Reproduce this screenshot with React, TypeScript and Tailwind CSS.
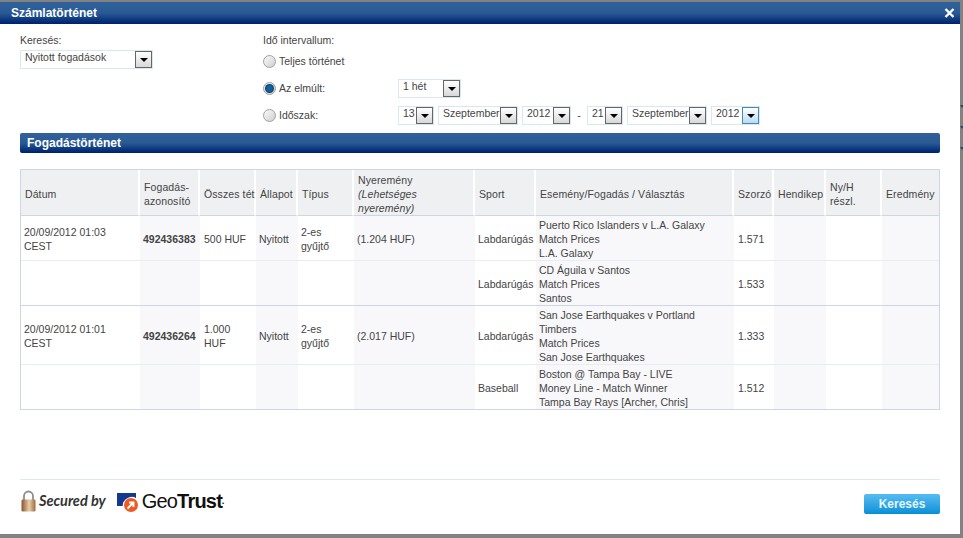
import React from "react";

const font = "font-['Liberation_Sans',Arial,sans-serif]";

const Select = ({ value, width, focused = false }: { value: string; width: string; focused?: boolean }) => (
  <div className={`${width} h-[19px] border border-[#d8e8f0] bg-white flex items-center justify-between pl-[4px] text-[10.5px] text-[#444]`}>
    <span className="relative top-[-2px] whitespace-nowrap">{value}</span>
    <span
      className={`w-[17px] h-[17px] shrink-0 border flex items-center justify-center ${
        focused ? "border-[#4a86b0] bg-gradient-to-b from-white to-[#b5dcf5]" : "border-[#666] bg-gradient-to-b from-white to-[#d8d8d8]"
      }`}
    >
      <span className="w-0 h-0 border-x-[4px] border-x-transparent border-t-[4px] border-t-black mt-[1px]" />
    </span>
  </div>
);

const Radio = ({ checked = false }: { checked?: boolean }) => (
  <span className="w-[13px] h-[13px] rounded-full border border-[#a0a0a0] bg-gradient-to-br from-[#fafafa] to-[#cfcfcf] flex items-center justify-center shrink-0">
    {checked && <span className="w-[7px] h-[7px] rounded-full bg-[#125f9c] ring-1 ring-[#0b3c66]" />}
  </span>
);

const Bar = ({ children, className }: { children: React.ReactNode; className: string }) => (
  <div className={`bg-gradient-to-b from-[#30619b] via-[#2a5a94] to-[#001f6e] text-white font-bold text-[12px] flex items-center ${className}`}>
    {children}
  </div>
);

const columns = [120, 60, 56, 42, 56, 121, 61, 198, 40, 52, 56, 58];

const shaded = (i: number) => i % 2 === 1;

const headers: React.ReactNode[] = [
  "Dátum",
  <>Fogadás-<br />azonosító</>,
  "Összes tét",
  "Állapot",
  "Típus",
  <>Nyeremény<br /><i>(Lehetséges<br />nyeremény)</i></>,
  "Sport",
  "Esemény/Fogadás / Választás",
  "Szorzó",
  "Hendikep",
  <>Ny/H<br />részl.</>,
  "Eredmény",
];

const rows = [
  {
    height: "h-[45px]",
    border: "border-[#e8edf0]",
    date: <>20/09/2012 01:03<br />CEST</>,
    id: "492436383",
    stake: "500 HUF",
    state: "Nyitott",
    type: <>2-es<br />gyűjtő</>,
    win: "(1.204 HUF)",
    sport: "Labdarúgás",
    event: ["Puerto Rico Islanders v L.A. Galaxy", "Match Prices", "L.A. Galaxy"],
    odds: "1.571",
  },
  {
    height: "h-[45px]",
    border: "border-[#ccd6e4]",
    sport: "Labdarúgás",
    event: ["CD Águila v Santos", "Match Prices", "Santos"],
    odds: "1.533",
  },
  {
    height: "h-[59px]",
    border: "border-[#e8edf0]",
    date: <>20/09/2012 01:01<br />CEST</>,
    id: "492436264",
    stake: <>1.000<br />HUF</>,
    state: "Nyitott",
    type: <>2-es<br />gyűjtő</>,
    win: "(2.017 HUF)",
    sport: "Labdarúgás",
    event: ["San Jose Earthquakes v Portland", "Timbers", "Match Prices", "San Jose Earthquakes"],
    odds: "1.333",
  },
  {
    height: "h-[44px]",
    border: "border-[#ccd6e4]",
    sport: "Baseball",
    event: ["Boston @ Tampa Bay - LIVE", "Money Line - Match Winner", "Tampa Bay Rays [Archer, Chris]"],
    odds: "1.512",
  },
];

const LockIcon = () => (
  <svg width="15" height="22" viewBox="0 0 15 22">
    <defs>
      <linearGradient id="lockBody" x1="0" x2="1" y1="0" y2="0">
        <stop offset="0" stopColor="#8a5230" />
        <stop offset="0.55" stopColor="#e8cfa8" />
        <stop offset="1" stopColor="#9a6a42" />
      </linearGradient>
    </defs>
    <path d="M3 10V6a4.5 4.5 0 0 1 9 0v4" fill="none" stroke="#8e8e8e" strokeWidth="1.8" />
    <rect x="0.5" y="9.5" width="14" height="12" rx="1.2" fill="url(#lockBody)" />
  </svg>
);

const GeoMark = () => (
  <svg width="21" height="19" viewBox="0 0 21 19">
    <path d="M0 0H19V5H13C9 5 6.5 8 6 13H0Z" fill="#15388f" />
    <circle cx="14" cy="12" r="8.4" fill="#fff" />
    <path d="M0 0H19V3.2C12 3.2 6.5 6 5 13H0Z" fill="#15388f" />
    <circle cx="14" cy="12" r="7" fill="#ef5a22" />
    <path d="M10.5 15.5L15.5 10.5M12 9.5H16.5V14" fill="none" stroke="#fff" strokeWidth="1.9" />
  </svg>
);

export default function App() {
  return (
    <div className={`${font} w-[963px] h-[538px] overflow-hidden bg-[#828282] pt-[2px] flex items-start`}>
      <div className="w-[960px] h-[532px] shrink-0 bg-white flex flex-col">
        <Bar className="h-[22px] shrink-0 pl-[11px] pr-[5px] justify-between">
          <span>Számlatörténet</span>
          <svg width="11" height="10" viewBox="0 0 11 10">
            <path d="M1.5 1L9.5 9M9.5 1L1.5 9" stroke="#fff" strokeWidth="2.4" />
          </svg>
        </Bar>

        <div className="flex-1 flex flex-col px-[20px]">
          <div className="flex text-[10.5px] text-[#444]">
            <div className="w-[243px] pt-[9px]">
              <div className="h-[17px] leading-[14px]">Keresés:</div>
              <Select value="Nyitott fogadások" width="w-[133px]" />
            </div>
            <div className="pt-[9px] flex flex-col">
              <div className="h-[15px] leading-[14px]">Idő intervallum:</div>
              <div className="h-[27px] flex items-center gap-[3px]">
                <Radio />
                <span>Teljes történet</span>
              </div>
              <div className="h-[27px] flex items-center">
                <Radio checked />
                <span className="w-[122px] pl-[3px]">Az elmúlt:</span>
                <Select value="1 hét" width="w-[63px]" />
              </div>
              <div className="h-[27px] flex items-center">
                <Radio />
                <span className="w-[122px] pl-[3px]">Időszak:</span>
                <div className="flex items-center gap-[4px]">
                  <Select value="13" width="w-[36px]" />
                  <Select value="Szeptember" width="w-[80px]" />
                  <Select value="2012" width="w-[49px]" />
                  <span className="w-[8px] text-center">-</span>
                  <Select value="21" width="w-[36px]" />
                  <Select value="Szeptember" width="w-[80px]" />
                  <Select value="2012" width="w-[49px]" focused />
                </div>
              </div>
            </div>
          </div>

          <Bar className="h-[20px] mt-[4px] pl-[7px] rounded-[2px] shrink-0">Fogadástörténet</Bar>

          <table className="mt-[16px] w-[920px] table-fixed border-separate border-spacing-0 border border-[#ccd6e4] text-[10.5px] leading-[14px] text-[#444]">
            <colgroup>
              {columns.map((w, i) => (
                <col key={i} style={{ width: i === 0 ? w - 1 : i === columns.length - 1 ? w - 1 : w }} />
              ))}
            </colgroup>
            <thead>
              <tr className="h-[46px]">
                {headers.map((h, i) => (
                  <th
                    key={i}
                    className="bg-[#eff0f2] font-normal text-left pl-[4px] pr-0 pt-[2px] whitespace-nowrap tracking-[0.1px] border-r-2 border-r-white border-b border-b-[#ccd6e4] last:border-r-0"
                  >
                    {h}
                  </th>
                ))}
              </tr>
            </thead>
            <tbody>
              {rows.map((r, ri) => {
                const last = ri === rows.length - 1;
                const cells: React.ReactNode[] = [
                  r.date,
                  <b key="id">{r.id}</b>,
                  r.stake,
                  r.state,
                  r.type,
                  r.win,
                  r.sport,
                  r.event.map((line) => <div key={line}>{line}</div>),
                  r.odds,
                  null,
                  null,
                  null,
                ];
                return (
                  <tr key={ri} className={r.height}>
                    {cells.map((c, i) => (
                      <td
                        key={i}
                        className={`${i === 2 || i === 8 ? "pl-[4px]" : "pl-[3px]"} pr-0 pt-[2px] ${shaded(i) ? "bg-[#f8f8fa]" : "bg-white"} ${last ? "" : `border-b ${r.border}`}`}
                      >
                        {c}
                      </td>
                    ))}
                  </tr>
                );
              })}
            </tbody>
          </table>

          <div className="mt-auto h-[55px] border-t border-[#dce9ef] flex items-start justify-between pt-[10px] shrink-0">
            <div className="flex items-center">
              <span className="ml-[1px]"><LockIcon /></span>
              <span className="ml-[3px] font-['Lato',sans-serif] font-bold italic text-[14.5px] text-[#333] whitespace-nowrap">Secured by</span>
              <span className="ml-[11px] mt-[2px]"><GeoMark /></span>
              <span className="ml-[4px] text-[20px] leading-none text-[#111] tracking-[-0.8px] whitespace-nowrap">
                Geo<b>Trust</b><sup className="text-[6px]">•</sup>
              </span>
            </div>
            <button className="w-[76px] h-[20px] mt-[4px] rounded-[2px] bg-gradient-to-b from-[#53bdf1] to-[#008fd6] text-[#e4f6ff] text-[12px] font-bold">
              Keresés
            </button>
          </div>
        </div>
      </div>

      <div className="flex-1 flex flex-col items-start pt-[103px] gap-[18px]">
        {[0, 1, 2].map((i) => (
          <span key={i} className="w-0 h-0 border-x-[2px] border-x-transparent border-t-[3px] border-t-[#2a4a6a]" />
        ))}
      </div>
    </div>
  );
}
